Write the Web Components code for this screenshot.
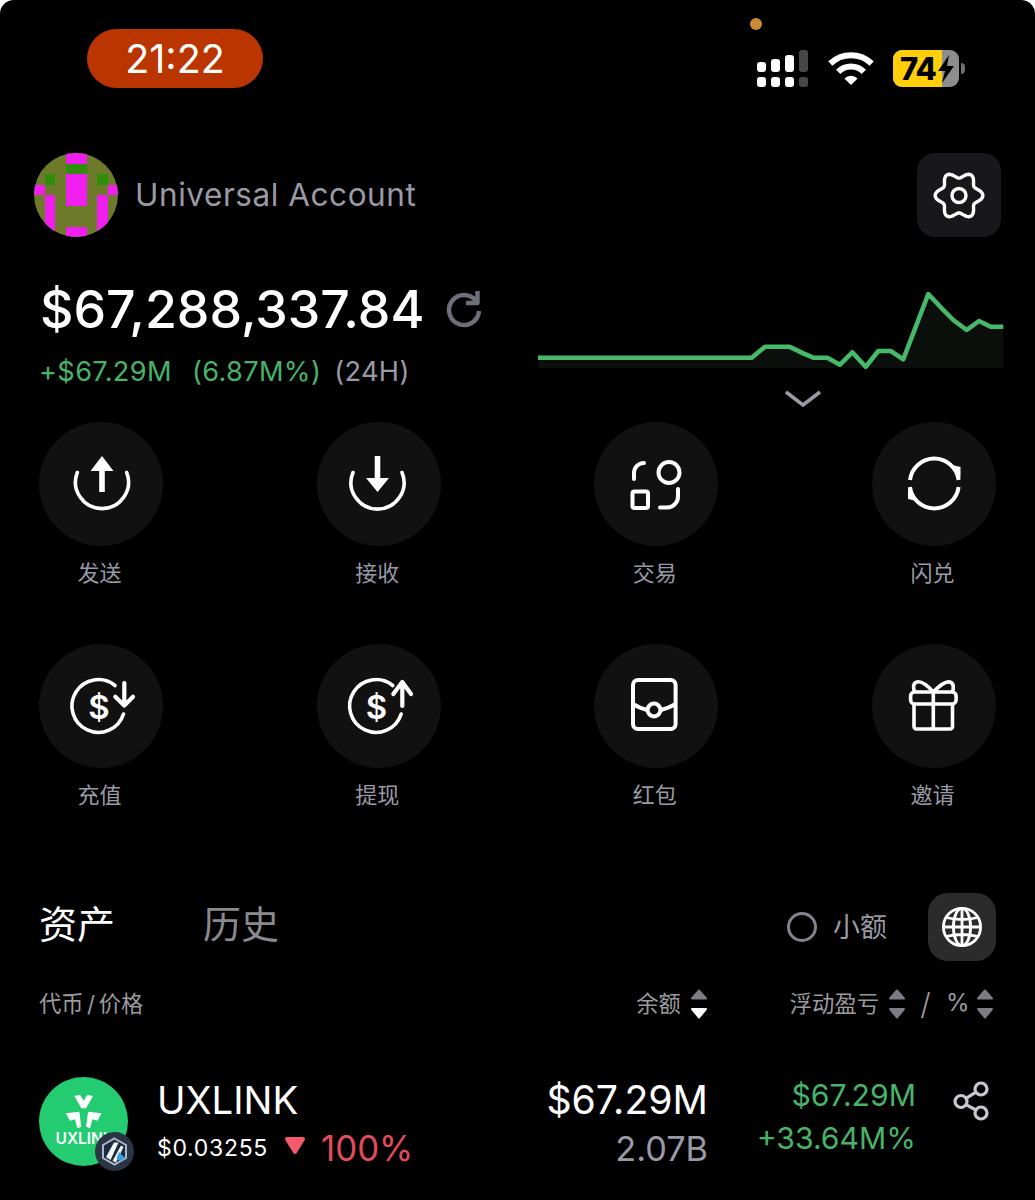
<!DOCTYPE html>
<html lang="zh">
<head>
<meta charset="utf-8">
<title>Universal Account</title>
<style>
  html, body { margin: 0; background: #fff; }
  body { font-family: Inter, "Noto Sans CJK SC", sans-serif; }
</style>
</head>
<body>
<wallet-app>
  <status-bar></status-bar>
  <account-row name="Universal Account"></account-row>
  <balance-panel></balance-panel>
  <action-grid>
    <action-item icon="send">发送</action-item>
    <action-item icon="receive">接收</action-item>
    <action-item icon="trade">交易</action-item>
    <action-item icon="swap">闪兑</action-item>
    <action-item icon="deposit">充值</action-item>
    <action-item icon="withdraw">提现</action-item>
    <action-item icon="packet">红包</action-item>
    <action-item icon="gift">邀请</action-item>
  </action-grid>
  <asset-tabs></asset-tabs>
  <table-head></table-head>
  <token-row></token-row>
</wallet-app>

<script>
  class WalletApp extends HTMLElement {
    constructor() {
      super();
      this.attachShadow({ mode: 'open' }).innerHTML = `
        <style>
          :host {
            display: block;
            width: 1035px;
            height: 1200px;
            overflow: hidden;
            background: #000;
            color: #fff;
            border-radius: 14px 14px 0 0;
            font-family: Inter, "Noto Sans CJK SC", sans-serif;
          }
        </style>
        <slot></slot>
      `;
    }
  }

  class StatusBar extends HTMLElement {
    constructor() {
      super();
      this.attachShadow({ mode: 'open' }).innerHTML = `
        <style>
          :host { display: flex; height: 153px; padding: 0 70px 0 87px; box-sizing: border-box; position: relative; }
          .pill {
            width: 176px; height: 59px; margin-top: 29px;
            background: #bb3500; border-radius: 30px;
            display: flex; align-items: center; justify-content: center;
            font-size: 39.5px; font-weight: 400;
          }
          .dot { position: absolute; left: 750px; top: 18px; width: 12px; height: 12px; border-radius: 50%; background: #c98c36; }
          .icons { margin-left: auto; margin-top: 50px; display: flex; align-items: flex-start; height: 37px; }
          .wifi { margin: 1px 19px 0 19px; }
          .battery { position: relative; width: 66px; height: 37px; border-radius: 9px; overflow: hidden; background: #8e8e8e; color: #000; }
          .fill { width: 49px; height: 37px; background: #ffd00a; font-size: 31px; font-weight: 800; line-height: 37px; padding-left: 7px; box-sizing: border-box; letter-spacing: -1px; }
          .bolt { position: absolute; left: 44px; top: 5px; }
          .nub { width: 4px; height: 11px; margin: 13px 0 0 2px; background: #6f6f6f; border-radius: 0 4px 4px 0; }
        </style>
        <div class="pill">21:22</div>
        <div class="dot"></div>
        <div class="icons">
          <svg width="52" height="37" viewBox="0 0 52 37">
            <g fill="#fff">
              <rect x="0" y="12" width="9" height="10" rx="3"/><rect x="14" y="9" width="9" height="13" rx="3"/><rect x="28" y="5" width="9" height="17" rx="3"/>
              <rect x="0" y="27" width="9" height="10" rx="3"/><rect x="14" y="27" width="9" height="10" rx="3"/><rect x="28" y="27" width="9" height="10" rx="3"/>
            </g>
            <g fill="#474747"><rect x="42" y="0" width="9" height="22" rx="3"/><rect x="42" y="27" width="9" height="10" rx="3"/></g>
          </svg>
          <svg class="wifi" width="46" height="36" viewBox="0 0 46 36" fill="none" stroke="#fff" stroke-width="6">
            <path d="M2.3 12.5A30 30 0 0 1 43.7 12.5"/>
            <path d="M10.2 20.8A18 18 0 0 1 35.8 20.8"/>
            <path d="M16.4 27.4A9.5 9.5 0 0 1 29.6 27.4L23 34Z" fill="#fff" stroke="none"/>
          </svg>
          <div class="battery">
            <div class="fill">74</div>
            <svg class="bolt" width="18" height="28" viewBox="0 0 18 28"><path d="M12 0L1 16H8L5 28L17 11H10Z" fill="#000"/></svg>
          </div>
          <div class="nub"></div>
        </div>
      `;
    }
  }

  class AccountRow extends HTMLElement {
    constructor() {
      super();
      // gear outline: 6 soft lobes round the centre
      let d = '';
      for (let i = 0; i < 72; i++) {
        const a = i * Math.PI / 36;
        const r = 20.6 + 3.3 * Math.cos(6 * a);
        d += (i ? 'L' : 'M') + (42 + r * Math.cos(a)).toFixed(2) + ' ' + (42.5 + r * Math.sin(a)).toFixed(2);
      }
      this.attachShadow({ mode: 'open' }).innerHTML = `
        <style>
          :host { display: flex; align-items: center; height: 84px; padding: 0 34px; }
          .avatar { width: 84px; height: 84px; border-radius: 50%; display: block; }
          .name { margin: 0 0 1px 17px; font-size: 31.5px; color: #9a9aa6; letter-spacing: 0.55px; }
          .gear { margin-left: auto; width: 84px; height: 84px; border-radius: 18px; background: #17171c; }
          .gear svg { display: block; }
        </style>
        <svg class="avatar" viewBox="0 0 8 8" shape-rendering="crispEdges">
          <rect width="8" height="8" fill="#6d7a2a"/>
          <g fill="#f01ff0">
            <rect x="3" y="0" width="2" height="1"/><rect x="3" y="2" width="2" height="3"/><rect x="3" y="7" width="2" height="1"/>
            <rect x="1" y="0" width="1" height="0.6"/><rect x="6" y="0" width="1" height="0.6"/>
            <rect x="0" y="3" width="1" height="1"/><rect x="7" y="3" width="1" height="1"/>
            <rect x="1" y="4" width="1" height="3.4"/><rect x="6" y="4" width="1" height="3.4"/>
          </g>
          <g fill="#2f8f0c">
            <rect x="3" y="1" width="2" height="1"/><rect x="1" y="2" width="1" height="1"/><rect x="6" y="2" width="1" height="1"/>
          </g>
        </svg>
        <span class="name">${this.getAttribute('name')}</span>
        <div class="gear">
          <svg width="84" height="84" viewBox="0 0 84 84" fill="none" stroke="#fff" stroke-width="3.4">
            <path d="${d}Z" stroke-linejoin="round"/>
            <circle cx="42" cy="42.5" r="7"/>
          </svg>
        </div>
      `;
    }
  }

  class BalancePanel extends HTMLElement {
    constructor() {
      super();
      const line = 'M0 65.7L213.7 65.7L227 54.7L251.3 54.7L265.3 61.3L275.3 65.7L289.3 65.7L302 72.7L314.3 60.3L327.7 74.7L340.3 59L352.7 59L365.3 67.3L390.3 2L403.7 16.3L415.3 28L428.7 38L441 29L452.7 34.7L465.3 34.7';
      this.attachShadow({ mode: 'open' }).innerHTML = `
        <style>
          :host { display: flex; height: 185px; padding-left: 40px; }
          .left { flex: 1; padding-top: 42px; }
          .total { display: flex; align-items: center; height: 60px; font-size: 51.8px; font-weight: 500; }
          .total svg { margin-left: 22px; }
          .change { display: flex; height: 36px; margin: 15px 0 0 -1px; font-size: 27.2px; letter-spacing: 0.35px; line-height: 36px; color: #46b46a; white-space: nowrap; }
          .pct { margin-left: 20px; }
          .period { margin-left: 13px; color: #9a9aa6; }
          .right { width: 466px; margin-right: 31px; padding-top: 55px; }
          .chart { display: block; }
          .more { display: block; margin: 20px 0 0 246px; }
        </style>
        <div class="left">
          <div class="total">
            <span>$67,288,337.84</span>
            <svg width="38" height="40" viewBox="0 0 38 40" fill="none" stroke="#6f6f7c" stroke-width="4.4">
              <path d="M30 12A15 15 0 1 0 33 22"/>
              <path d="M31.5 2V14H20" stroke-linejoin="round"/>
            </svg>
          </div>
          <div class="change"><span>+$67.29M</span><span class="pct">(6.87M%)</span><span class="period">(24H)</span></div>
        </div>
        <div class="right">
          <svg class="chart" width="466" height="78" viewBox="0 0 466 78">
            <path d="${line}L465.3 76L0 76Z" fill="#0a0f0b"/>
            <path d="${line}" fill="none" stroke="#46b96a" stroke-width="4.6" stroke-linejoin="round"/>
          </svg>
          <svg class="more" width="38" height="18" viewBox="0 0 38 18" fill="none" stroke="#9a9aa6" stroke-width="3.6">
            <path d="M2 2L19 15L36 2"/>
          </svg>
        </div>
      `;
    }
  }

  class ActionGrid extends HTMLElement {
    constructor() {
      super();
      this.attachShadow({ mode: 'open' }).innerHTML = `
        <style>
          :host {
            display: grid;
            grid-template-columns: repeat(4, 124px);
            justify-content: space-between;
            row-gap: 58.5px;
            padding: 0 39px;
          }
        </style>
        <slot></slot>
      `;
    }
  }

  const actionIcons = {
    send: `<path d="M38.3 50.5A26.5 26.5 0 1 0 87.7 50.5" stroke-linecap="round"/>
      <path d="M63 34L74.5 49H65.8V70H60.2V49H51.5Z" fill="#fff" stroke="none"/>`,
    receive: `<path d="M36 50.5A26.5 26.5 0 1 0 85 50.5" stroke-linecap="round"/>
      <path d="M60.5 70L72 56H63.3V34H57.7V56H49Z" fill="#fff" stroke="none"/>`,
    trade: `<g stroke-width="4">
      <path d="M40 57V51A10 10 0 0 1 50 41" stroke-linecap="round"/>
      <circle cx="75" cy="50.5" r="10.5"/>
      <rect x="38.5" y="69.5" width="15.5" height="16.5" rx="2"/>
      <path d="M84 67V74A11 11 0 0 1 73 85.5H66" stroke-linecap="round"/></g>`,
    swap: `<g transform="translate(1 0)"><path d="M37 58A24.5 24.5 0 0 1 85.6 58" stroke-width="4"/>
      <path d="M85.6 65A24.5 24.5 0 0 1 37 65" stroke-width="4"/>
      <path d="M79 43L87.5 45V56Z" fill="#fff" stroke="none"/>
      <path d="M43.6 79L35 77V66Z" fill="#fff" stroke="none"/></g>`,
    deposit: `<path d="M76 41.5A26.4 26.4 0 1 0 84.5 70" stroke-linecap="round"/>
      <text x="60" y="75" text-anchor="middle" font-size="33" font-weight="600" fill="#fff" stroke="none">$</text>
      <path d="M85.3 39V61M76.3 52.7L85.3 61.6L94 52.7" stroke-width="4.2" stroke-linecap="round" stroke-linejoin="round"/>`,
    withdraw: `<path d="M75.7 41.5A26.4 26.4 0 1 0 84.2 70" stroke-linecap="round"/>
      <text x="59.5" y="75" text-anchor="middle" font-size="33" font-weight="600" fill="#fff" stroke="none">$</text>
      <path d="M85.3 62V38.5M76.3 50L85.3 38L94 50" stroke-width="4.2" stroke-linecap="round" stroke-linejoin="round"/>`,
    packet: `<g stroke-width="4"><rect x="39" y="36" width="42.6" height="49" rx="5"/>
      <path d="M39 60Q45 64 53 66M67 66Q75 64 81.5 60"/>
      <circle cx="60" cy="66" r="6.4"/></g>`,
    gift: `<rect x="38.6" y="48" width="45.5" height="12" rx="4"/>
      <path d="M42 60V82.5A2.5 2.5 0 0 0 44.5 85H78A2.5 2.5 0 0 0 80.5 82.5V60M61.3 48V85"/>
      <path d="M61.3 48C55 41 49 37 45 38C40.5 39 41 45 43 48M61.3 48C68 41 74 37 78 38C82 39 82 45 80 48" stroke-linejoin="round"/>`
  };

  class ActionItem extends HTMLElement {
    constructor() {
      super();
      this.attachShadow({ mode: 'open' }).innerHTML = `
        <style>
          :host { display: block; width: 124px; text-align: center; }
          svg { display: block; background: #111; border-radius: 50%; font-family: Inter, sans-serif; }
          .label { margin: 9.5px 3px 0 0; height: 30px; line-height: 30px; font-size: 22px; color: #9a9aa6; font-family: "Noto Sans CJK SC", sans-serif; }
        </style>
        <svg width="124" height="124" viewBox="0 0 124 124" fill="none" stroke="#fff" stroke-width="3.6">
          ${actionIcons[this.getAttribute('icon')]}
        </svg>
        <div class="label"><slot></slot></div>
      `;
    }
  }

  class AssetTabs extends HTMLElement {
    constructor() {
      super();
      this.attachShadow({ mode: 'open' }).innerHTML = `
        <style>
          :host {
            display: flex; align-items: center; height: 68px; margin-top: 85.5px; padding: 0 39px 0 39px;
            font-family: "Noto Sans CJK SC", sans-serif;
          }
          .tab { font-size: 38px; color: #8a8a8f; margin-bottom: 12px; }
          .tab.on { color: #fff; margin-right: 88px; }
          .radio { margin-left: auto; width: 30px; height: 30px; box-sizing: border-box; border: 3.6px solid #83838e; border-radius: 50%; }
          .small { margin: 0 41px 4px 16px; font-size: 27px; color: #9a9aa6; }
          .globe { width: 68px; height: 68px; border-radius: 20px; background: #2b2b2b; display: flex; align-items: center; justify-content: center; }
        </style>
        <span class="tab on">资产</span>
        <span class="tab">历史</span>
        <span class="radio"></span>
        <span class="small">小额</span>
        <div class="globe">
          <svg width="42" height="42" viewBox="0 0 42 42" fill="none" stroke="#fff" stroke-width="2.8">
            <circle cx="21" cy="21" r="18.6"/>
            <ellipse cx="21" cy="21" rx="8.6" ry="18.6"/>
            <path d="M21 2.4V39.6M2.4 21H39.6M5 11.5Q21 15.5 37 11.5M5 30.5Q21 26.5 37 30.5"/>
          </svg>
        </div>
      `;
    }
  }

  class SortArrows extends HTMLElement {
    constructor() {
      super();
      const down = this.hasAttribute('down') ? '#fff' : '#7c7c84';
      this.attachShadow({ mode: 'open' }).innerHTML = `
        <style>:host { display: block; width: 16px; height: 30px; } svg { display: block; }</style>
        <svg width="16" height="30" viewBox="0 0 16 30" stroke-linejoin="round" stroke-width="2">
          <path d="M8 1.5L15 9.5H1Z" fill="#7c7c84" stroke="#7c7c84"/>
          <path d="M8 28.5L15 20H1Z" fill="${down}" stroke="${down}"/>
        </svg>
      `;
    }
  }

  class TableHead extends HTMLElement {
    constructor() {
      super();
      this.attachShadow({ mode: 'open' }).innerHTML = `
        <style>
          :host {
            display: flex; align-items: center; height: 86px; padding: 0 42px 0 40px;
            font-family: "Noto Sans CJK SC", sans-serif; font-size: 22.3px; color: #9a9a9f;
          }
          .token { margin-bottom: 5px; margin-left: -1px; }
          .token .sep { padding: 0 3.5px; font-family: Inter, sans-serif; }
          .group { display: flex; align-items: center; }
          .group > span { margin-bottom: 5px; }
          .group sort-arrows { margin-left: 10px; }
          .balance { margin-left: auto; margin-right: 83px; }
          .slash { width: 41px; text-align: center; font-family: Inter, sans-serif; font-size: 30px; font-weight: 300; }
          .group > .pct { font-family: Inter, sans-serif; font-size: 24px; width: 21px; margin-bottom: 3px; }
        </style>
        <span class="token">代币<span class="sep">/</span>价格</span>
        <div class="group balance"><span>余额</span><sort-arrows down></sort-arrows></div>
        <div class="group"><span>浮动盈亏</span><sort-arrows></sort-arrows></div>
        <span class="slash">/</span>
        <div class="group"><span class="pct">%</span><sort-arrows></sort-arrows></div>
      `;
    }
  }

  class TokenRow extends HTMLElement {
    constructor() {
      super();
      this.attachShadow({ mode: 'open' }).innerHTML = `
        <style>
          :host { display: flex; align-items: flex-start; padding: 30px 45px 0 39px; }
          .logo { position: relative; width: 89px; height: 89px; margin-right: 29px; flex: none; }
          .logo > svg { display: block; }
          .badge { position: absolute; left: 56px; top: 55px; }
          .info { flex: 1; padding-top: 3px; }
          .symbol { height: 40px; line-height: 40px; font-size: 38.3px; font-weight: 400; }
          .price { display: flex; align-items: center; height: 40px; margin-top: 8px; font-size: 23px; letter-spacing: 0.7px; white-space: nowrap; }
          .price svg { margin-left: 16px; margin-top: -6px; }
          .drop { margin-left: 15px; font-size: 34.8px; color: #e24b5e; letter-spacing: 0; }
          .value { text-align: right; padding-top: 3px; }
          .usd { height: 40px; line-height: 40px; font-size: 39.2px; }
          .qty { height: 40px; margin-top: 9px; line-height: 40px; font-size: 34.3px; color: #9a9aa6; }
          .pnl { width: 208px; text-align: right; color: #46b46a; font-size: 30.2px; line-height: 36px; }
          .pnl div + div { margin-top: 7px; }
          .share { display: block; margin: 4px 0 0 37px; }
        </style>
        <div class="logo">
          <svg width="89" height="89" viewBox="0 0 89 89">
            <circle cx="44.5" cy="44.5" r="44.5" fill="#23cc70"/>
            <g fill="#fff">
              <path d="M35.3 19L41 18L44.7 23.7L48.3 18L54 19L47 31.3H42.3Z"/>
              <path d="M26.7 36.3L40.3 34.7L42.3 49.7L38.3 51.3L36 42.3L31 43.7Z"/>
              <path d="M62.7 36.3L49.1 34.7L47.1 49.7L51.1 51.3L53.4 42.3L58.4 43.7Z"/>
            </g>
            <text x="16.5" y="67" font-size="15.5" font-weight="600" fill="#fff">UXLINK</text>
          </svg>
          <svg class="badge" width="39" height="39" viewBox="0 0 39 39">
            <circle cx="19.5" cy="19.5" r="19.5" fill="#2b3442"/>
            <path d="M19.5 6.5L31 13V26L19.5 32.5L8 26V13Z" fill="#1c2a3f" stroke="#a9b8cb" stroke-width="2"/>
            <path d="M11 25L19 10.5H23.5L15.5 28ZM17.5 29L26 13.5L28.5 15L21 30.5Z" fill="#f4f6f8"/>
            <path d="M24 20L30 26L25 29.5L21.5 26Z" fill="#3d9fe0"/>
          </svg>
        </div>
        <div class="info">
          <div class="symbol">UXLINK</div>
          <div class="price">
            <span>$0.03255</span>
            <svg width="22" height="19" viewBox="0 0 22 19"><path d="M3 3H19L11 16Z" fill="#f5596c" stroke="#f5596c" stroke-width="4" stroke-linejoin="round"/></svg>
            <span class="drop">100%</span>
          </div>
        </div>
        <div class="value">
          <div class="usd">$67.29M</div>
          <div class="qty">2.07B</div>
        </div>
        <div class="pnl">
          <div>$67.29M</div>
          <div>+33.64M%</div>
        </div>
        <svg class="share" width="37" height="41" viewBox="0 0 37 41" fill="none" stroke="#c8c8d0" stroke-width="3.2">
          <circle cx="28" cy="8" r="6"/>
          <circle cx="8" cy="20.5" r="6"/>
          <circle cx="28" cy="32" r="6"/>
          <path d="M13 17.4L23 11.2M13 23.6L23 29"/>
        </svg>
      `;
    }
  }

  customElements.define('wallet-app', WalletApp);
  customElements.define('status-bar', StatusBar);
  customElements.define('account-row', AccountRow);
  customElements.define('balance-panel', BalancePanel);
  customElements.define('action-grid', ActionGrid);
  customElements.define('action-item', ActionItem);
  customElements.define('asset-tabs', AssetTabs);
  customElements.define('sort-arrows', SortArrows);
  customElements.define('table-head', TableHead);
  customElements.define('token-row', TokenRow);
</script>
</body>
</html>
